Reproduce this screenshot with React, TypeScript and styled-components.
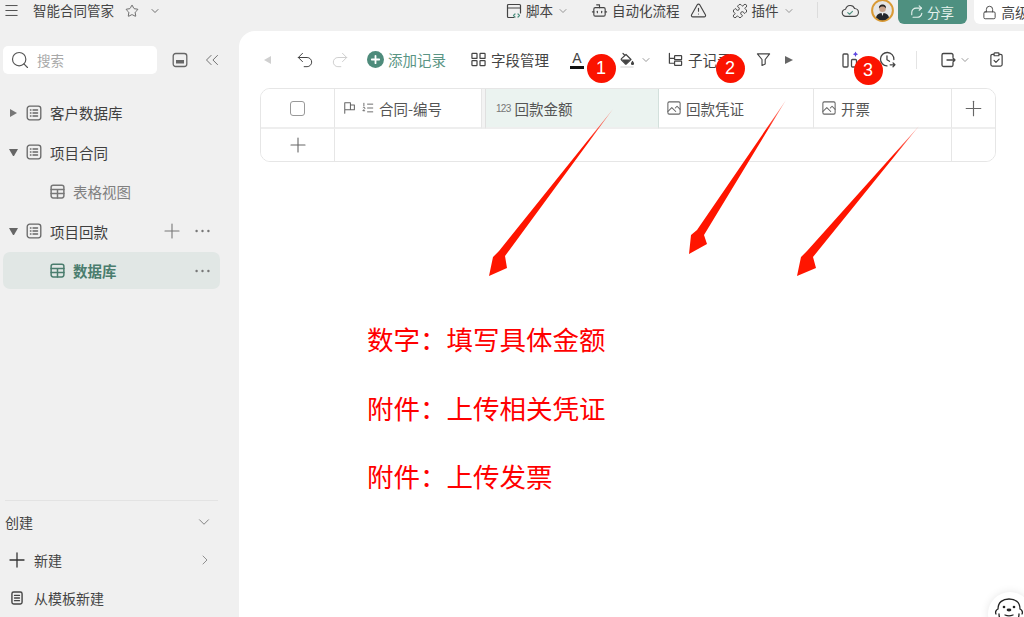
import React from 'react'
import styled, { createGlobalStyle } from 'styled-components'
import {
  Bot, ChevronDown, ChevronRight, ChevronsLeft, Lock, Menu, Plus, Puzzle, Redo2, Search, Star, TriangleAlert, Undo2,
} from 'lucide-react'

const GlobalStyle = createGlobalStyle`
  html, body { margin: 0; padding: 0; }
  body {
    font-family: "Noto Sans CJK SC", "Noto Sans", sans-serif;
    color: #3b3b3b;
    background: #f0f0f0;
  }
  * { box-sizing: border-box; }
`

const Page = styled.div`
  position: relative;
  width: 1024px;
  height: 617px;
  overflow: hidden;
  background: #f0f0f0;
  display: flex;
  flex-direction: column;
`

/* ---------- top bar ---------- */
const Header = styled.header`
  height: 31px;
  flex: none;
  display: flex;
  align-items: flex-start;
  color: #444;
`
const HeadItem = styled.div<{ $ml?: number }>`
  height: 21px;
  display: flex;
  align-items: center;
  gap: 4px;
  margin-left: ${(p) => p.$ml || 0}px;
  font-size: 13.5px;
  line-height: 21px;
  white-space: nowrap;
  flex: none;
`
const ShareButton = styled.div`
  width: 69px;
  height: 24px;
  margin-left: 4px;
  flex: none;
  background: #4e9080;
  color: #e4f0ec;
  border-radius: 0 0 6px 6px;
  display: flex;
  align-items: center;
  justify-content: center;
  gap: 3px;
  font-size: 13.5px;
`
const UpgradeButton = styled.div`
  width: 50px;
  height: 24px;
  margin-left: 7px;
  flex: none;
  background: #fff;
  border-radius: 0 0 0 6px;
  display: flex;
  align-items: center;
  gap: 5px;
  padding-left: 8px;
  font-size: 13.5px;
  white-space: nowrap;
  overflow: hidden;
`
const HeadDivider = styled.div`
  width: 1px;
  height: 16px;
  margin: 2px 0 0 22px;
  background: #dcdcdc;
  flex: none;
`

/* ---------- sidebar ---------- */
const Body = styled.div`
  flex: 1;
  min-height: 0;
  display: flex;
`
const Sidebar = styled.aside`
  width: 239px;
  flex: none;
  display: flex;
  flex-direction: column;
  padding-top: 15px;
`
const SearchRow = styled.div`
  display: flex;
  align-items: center;
  padding-left: 3px;
  color: #666;
`
const SearchBox = styled.div`
  width: 154px;
  height: 28px;
  background: #fff;
  border-radius: 5px;
  display: flex;
  align-items: center;
  gap: 7px;
  padding-left: 7px;
  font-size: 13.5px;
  color: #a8a8a8;
  margin-right: 15px;
`
const SearchGap = styled.span`
  width: 13px;
  flex: none;
`
const Tree = styled.div`
  margin-top: 19px;
  display: flex;
  flex-direction: column;
`
const TreeRow = styled.div<{ $child?: boolean; $active?: boolean }>`
  position: relative;
  height: 39.5px;
  display: flex;
  align-items: center;
  padding-left: ${(p) => (p.$child ? 50 : 9)}px;
  font-size: 14.5px;
  color: ${(p) => (p.$active ? '#4a7d6e' : p.$child ? '#808080' : '#3f3f3f')};
  font-weight: ${(p) => (p.$active ? 700 : 400)};
  ${(p) =>
    p.$active &&
    `&::before {
      content: '';
      position: absolute;
      left: 3px;
      top: 1px;
      width: 217px;
      height: 37px;
      background: #e1e7e5;
      border-radius: 7px;
    }`}
  > * { position: relative; }
`
const Caret = styled.span<{ $open?: boolean }>`
  flex: none;
  height: 0;
  margin-right: 8px;
  ${(p) =>
    p.$open
      ? `width: 9px; border-left: 4.5px solid transparent; border-right: 4.5px solid transparent; border-top: 7px solid #666;`
      : `width: 0; border-top: 4.5px solid transparent; border-bottom: 4.5px solid transparent; border-left: 7px solid #777; margin-left: 1px; margin-right: 9px;`}
`
const RowLabel = styled.span`
  margin-left: 8px;
  white-space: nowrap;
`
const RowActions = styled.div`
  margin-left: auto;
  padding-right: 29px;
  display: flex;
  align-items: center;
  gap: 14px;
  color: #777;
`
const SideBottom = styled.div`
  margin-top: auto;
  margin-left: 5px;
  width: 213px;
  border-top: 1px solid #e3e3e3;
  padding-top: 2px;
`
const BottomRow = styled.div<{ $indent?: boolean }>`
  height: 38px;
  display: flex;
  align-items: center;
  gap: 10px;
  padding-left: ${(p) => (p.$indent ? 5 : 0)}px;
  padding-right: 5px;
  font-size: 14px;
  color: #444;
`
const IconSlot = styled.span`
  width: 14px;
  flex: none;
  display: flex;
  justify-content: center;
  > svg { flex: none; }
`
const RowChevron = styled.span`
  margin-left: auto;
  display: flex;
  color: #777;
`

/* ---------- main panel ---------- */
const Main = styled.main`
  flex: 1;
  background: #fff;
  border-top-left-radius: 16px;
  padding-left: 21px;
`
const Toolbar = styled.div`
  height: 57px;
  display: flex;
  align-items: center;
  color: #555;
`
const Tool = styled.div<{ $ml?: number; $green?: boolean; $muted?: boolean; $tight?: boolean }>`
  flex: none;
  display: flex;
  align-items: center;
  gap: ${(p) => (p.$tight ? 4 : 5)}px;
  margin-left: ${(p) => p.$ml || 0}px;
  font-size: 14.5px;
  white-space: nowrap;
  color: ${(p) => (p.$green ? '#5a9584' : p.$muted ? '#cfcfcf' : '#444')};
`
const ToolDivider = styled.div`
  width: 1px;
  height: 18px;
  margin-left: 20px;
  background: #e4e4e4;
  flex: none;
`
const TextColor = styled.span`
  width: 14px;
  height: 18px;
  display: flex;
  flex-direction: column;
  align-items: center;
  font: 14px/14px "Liberation Sans", sans-serif;
  color: #444;
  &::after {
    content: '';
    width: 14px;
    height: 3px;
    flex: none;
    background: #111;
    margin-top: 1px;
  }
`
const PlayArrow = styled.span`
  width: 0;
  height: 0;
  border-top: 4.5px solid transparent;
  border-bottom: 4.5px solid transparent;
  border-left: 8px solid #666;
`
const BackArrow = styled.span`
  width: 0;
  height: 0;
  border-top: 4.5px solid transparent;
  border-bottom: 4.5px solid transparent;
  border-right: 7px solid #d0d0d0;
`

const Table = styled.div`
  width: 736px;
  display: grid;
  grid-template-columns: 74px 147px 4px 173px 155px 138px 43px;
  grid-template-rows: 40px 32px;
  border: 1px solid #e6e6e6;
  border-radius: 10px;
  overflow: hidden;
`
const Cell = styled.div<{ $active?: boolean; $center?: boolean; $span?: number; $top?: boolean; $noRight?: boolean }>`
  display: flex;
  align-items: center;
  justify-content: ${(p) => (p.$center ? 'center' : 'flex-start')};
  gap: 5px;
  padding-left: ${(p) => (p.$center ? 0 : 8)}px;
  font-size: 14.5px;
  color: #555;
  white-space: nowrap;
  background: ${(p) => (p.$active ? '#ebf3f0' : '#fff')};
  border-right: ${(p) => (p.$noRight ? 'none' : `1px solid ${p.$active ? '#d3e0dc' : '#e6e6e6'}`)};
  border-bottom: ${(p) => (p.$top ? '2px solid #eeeeee' : 'none')};
  ${(p) => p.$span && `grid-column: span ${p.$span};`}
`
const ResizeGap = styled.div`
  background: #f3f3f3;
  border-right: 1px solid #e0e0e0;
  border-bottom: 2px solid #eeeeee;
`
const Checkbox = styled.span`
  width: 15px;
  height: 15px;
  border: 1.3px solid #999;
  border-radius: 3px;
`
const NumTag = styled.span`
  font: 10px "Liberation Sans", sans-serif;
  letter-spacing: -0.7px;
  color: #777;
  margin: 0 -1px 0 2px;
`

const Notes = styled.div`
  margin: 157px 0 0 107px;
  display: flex;
  flex-direction: column;
  gap: 28.5px;
`
const Note = styled.div`
  height: 40px;
  font-size: 26.5px;
  line-height: 40px;
  color: #ff0000;
  white-space: nowrap;
`

/* ---------- annotation overlays ---------- */
const Badge = styled.div<{ $x: number; $y: number }>`
  position: absolute;
  left: ${(p) => p.$x - 14.5}px;
  top: ${(p) => p.$y - 14.5}px;
  width: 29px;
  height: 29px;
  border-radius: 50%;
  background: #fb1300;
  color: #fff;
  font: 18px/29px "Liberation Sans", sans-serif;
  text-align: center;
`
const Overlay = styled.svg`
  position: absolute;
  left: 0;
  top: 0;
  width: 1024px;
  height: 617px;
  pointer-events: none;
`
const Mascot = styled.div`
  position: absolute;
  left: 988px;
  top: 592px;
  width: 44px;
  height: 44px;
  border-radius: 50%;
  background: #fff;
  box-shadow: 0 0 8px rgba(0, 0, 0, 0.1);
  display: flex;
  justify-content: center;
  padding-top: 5px;
  padding-right: 2px;
`

/* ---------- drawn icons ---------- */
const Svg: React.FC<{ size?: number; sw?: number; children: React.ReactNode; color?: string }> = ({ size = 16, sw = 1.4, children, color }) => (
  <svg width={size} height={size} viewBox="0 0 16 16" fill="none" stroke={color || 'currentColor'} strokeWidth={sw} strokeLinecap="round" strokeLinejoin="round" style={{ flex: 'none' }}>
    {children}
  </svg>
)

const ListIcon = () => (
  <Svg size={16} sw={1.3} color="#666">
    <rect x="1.2" y="1.2" width="13.6" height="13.6" rx="2.5" />
    <path d="M4.4 5h.6M7 5h4.6M4.4 8h.6M7 8h4.6M4.4 11h.6M7 11h4.6" />
  </Svg>
)
const TableIcon: React.FC<{ color?: string }> = ({ color = '#777' }) => (
  <Svg size={15} sw={1.6} color={color}>
    <rect x="1.2" y="1.2" width="13.6" height="13.6" rx="2.2" />
    <path d="M1.2 5.8h13.6M1.2 10.2h13.6M8 5.8v9" />
  </Svg>
)
const Dots = () => (
  <svg width="15" height="4" viewBox="0 0 15 4" fill="#777" style={{ flex: 'none' }}>
    <circle cx="1.6" cy="2" r="1.2" /><circle cx="7.5" cy="2" r="1.2" /><circle cx="13.4" cy="2" r="1.2" />
  </svg>
)
const PanelIcon = () => (
  <Svg size={16} sw={1.3} color="#666">
    <rect x="1.2" y="1.5" width="13.6" height="13" rx="2.5" />
    <rect x="4" y="8" width="8" height="3.5" fill="#666" stroke="none" />
  </Svg>
)
const ScriptIcon = () => (
  <Svg size={16} sw={1.2}>
    <path d="M8 14.5H2.5a1 1 0 0 1-1-1v-11a1 1 0 0 1 1-1h11a1 1 0 0 1 1 1V10M1.5 5h13" />
    <path d="M9 11l-1.5 1.5L9 14M12 11l1.5 1.5L12 14" stroke="#4e9080" />
  </Svg>
)
const CloudCheckIcon = () => (
  <Svg size={18} sw={1}>
    <path d="M4.5 12.8a3.2 3.2 0 0 1-.4-6.4 4.2 4.2 0 0 1 8-.6 3.5 3.5 0 0 1-.2 7z" />
    <path d="M6 9.4l1.6 1.5 2.6-2.6" stroke="#4e9080" />
  </Svg>
)
const Avatar = () => (
  <svg width="23" height="23" viewBox="0 0 23 23" style={{ flex: 'none' }}>
    <circle cx="11.5" cy="11.5" r="10.4" fill="#e6e6e6" stroke="#d99a35" strokeWidth="2" />
    <path d="M5 18.5c1-3.5 3.5-4.5 6.5-4.5s5.5 1 6.5 4.5a9 9 0 0 1-13 0z" fill="#23262b" />
    <path d="M10.5 14h2l-1 3z" fill="#f4f4f4" />
    <circle cx="11.5" cy="9.8" r="3.3" fill="#c9a48c" />
    <path d="M8 9.5c-.3-3 1.5-4 3.5-4s3.8 1 3.5 4c-1-1.5-2-2-3.5-2s-2.5.5-3.5 2z" fill="#2b2623" />
  </svg>
)
const ShareIcon = () => (
  <Svg size={14} sw={1.3}>
    <path d="M13.5 9.5a5.5 5.5 0 0 1-5.5 4.5H3.5M2 11V8.5a5 5 0 0 1 5-5h6" />
    <path d="M10.5 1l2.7 2.5L10.5 6" />
  </Svg>
)
const AddCircle = () => (
  <svg width="17" height="17" viewBox="0 0 17 17" style={{ flex: 'none' }}>
    <circle cx="8.5" cy="8.5" r="8.5" fill="#4e8b7b" />
    <path d="M8.5 4.8v7.4M4.8 8.5h7.4" stroke="#fff" strokeWidth="1.8" strokeLinecap="round" />
  </svg>
)
const FieldsIcon = () => (
  <Svg size={15} sw={1.3}>
    <rect x="1" y="1.5" width="5.4" height="5.4" rx=".6" />
    <rect x="9.6" y="1.5" width="5.4" height="5.4" rx=".6" />
    <rect x="1" y="9.1" width="5.4" height="5.4" rx=".6" />
    <rect x="9.6" y="9.1" width="5.4" height="5.4" rx=".6" />
  </Svg>
)
const PaintIcon = () => (
  <Svg size={16} sw={1.2}>
    <path d="M4 1.5l1.5 1.5" />
    <path d="M7 2.5l5 5-4.5 4.2a1 1 0 0 1-1.4 0L2.5 8a1 1 0 0 1 0-1.4z" />
    <path d="M2.8 7.5h8.5L7.5 11.7a1 1 0 0 1-1.4 0z" fill="#444" stroke="none" />
    <path d="M13.5 9.5c.6.9 1 1.5 1 2a1 1 0 0 1-2 0c0-.5.4-1.1 1-2z" fill="#444" />
    <path d="M2 15h12" stroke="#e2e2e2" strokeWidth="1.6" />
  </Svg>
)
const SubRecordIcon = () => (
  <Svg size={15} sw={1.3}>
    <path d="M1.5 1.5v10.5h4.5M1.5 6.8h4.5" />
    <rect x="7" y="3.8" width="7.5" height="4.4" rx=".6" />
    <rect x="7" y="9.8" width="7.5" height="4.4" rx=".6" />
  </Svg>
)
const FunnelIcon = () => (
  <Svg size={15} sw={1.2}>
    <path d="M1.5 2h13L9.8 8v4.8l-3.4 1.6V8z" />
  </Svg>
)
const BoardIcon = () => (
  <svg width="18" height="17" viewBox="0 0 18 17" fill="none" stroke="#4a4a4a" strokeWidth="1.3" style={{ flex: 'none' }}>
    <rect x="1" y="3" width="5" height="13" rx="1" />
    <rect x="9.5" y="8.5" width="5" height="7.5" rx="1" />
    <path d="M13.5 0.5l.9 1.8 1.8.9-1.8.9-.9 1.8-.9-1.8-1.8-.9 1.8-.9z" fill="#5b45e0" stroke="none" />
  </svg>
)
const HistoryIcon = () => (
  <Svg size={17} sw={1.2}>
    <path d="M7.5 14A6.3 6.3 0 1 1 14 8" />
    <path d="M7.5 4.5v3.8l2.4 1.4M10.5 13h4.5M13.2 11.2L15 13l-1.8 1.8" />
  </Svg>
)
const ExportIcon = () => (
  <Svg size={16} sw={1.3}>
    <path d="M13 5V3a1.5 1.5 0 0 0-1.5-1.5h-8A1.5 1.5 0 0 0 2 3v10a1.5 1.5 0 0 0 1.5 1.5h8A1.5 1.5 0 0 0 13 13v-2" />
    <path d="M7 8h8M13 6l2 2-2 2" />
  </Svg>
)
const ClipboardIcon = () => (
  <Svg size={15} sw={1.3}>
    <rect x="2" y="2.5" width="12" height="12.5" rx="1.6" />
    <rect x="5.4" y="1" width="5.2" height="3" rx=".6" fill="#fff" />
    <path d="M5.4 9l2 2 3.4-3.4" />
  </Svg>
)
const FlagIcon = () => (
  <Svg size={14} sw={1.2} color="#666">
    <path d="M2 14V2h6.5v8H2M8.5 4.5h4.5v5.5H8.5" />
  </Svg>
)
const OrderIcon = () => (
  <svg width="12" height="14" viewBox="0 0 14 14" style={{ flex: 'none' }} fill="none" stroke="#666" strokeWidth="1.1">
    <path d="M6 2.5h7M6 7h7M6 11.5h7M2.2 1v4M1 6.8c.6-1 2.4-.8 2.4.4 0 1-1.5 1.4-2.4 3h2.6" />
  </svg>
)
const PictureIcon = () => (
  <Svg size={14} sw={1.2} color="#666">
    <rect x="1" y="1" width="14" height="14" rx="1.5" />
    <path d="M1 12l4.5-4.5L10 12M9.5 8l2-2 3.5 3.5" />
  </Svg>
)
const DocIcon = () => (
  <Svg size={14} sw={1.6} color="#444">
    <rect x="2.2" y="1.2" width="11.6" height="13.6" rx="2" />
    <path d="M5.2 5h5.6M5.2 8h5.6M5.2 11h5.6" />
  </Svg>
)
const OtterFace = () => (
  <svg width="30" height="26" viewBox="0 0 30 26" fill="none" stroke="#222" strokeWidth="1.3" strokeLinecap="round">
    <path d="M4 12C4 5 9 2 15 2s11 3 11 10c2 1 3 3 2 5M4 12c-2 1-3 3-2 5M5 17c0 5 3 9 10 9s10-4 10-9" />
    <circle cx="10" cy="10" r="1.3" fill="#222" stroke="none" />
    <circle cx="20" cy="10" r="1.3" fill="#222" stroke="none" />
    <ellipse cx="15" cy="13" rx="2.4" ry="1.4" fill="#222" stroke="none" />
    <path d="M11 18c2.5 1 5.5 1 8 0" />
  </svg>
)

type Point = [number, number]
type ArrowShape = { id: string; tail: Point; tip: Point; barbA: Point; barbB: Point; neckA: Point; neckB: Point }

const arrows: ArrowShape[] = [
  { id: 'a1', tail: [613, 109], tip: [489, 276], barbA: [493, 257], barbB: [507, 268], neckA: [499, 251], neckB: [505, 256] },
  { id: 'a2', tail: [786, 100], tip: [689, 254], barbA: [691, 235], barbB: [707, 244], neckA: [697, 230], neckB: [704, 235] },
  { id: 'a3', tail: [919, 126], tip: [797, 276], barbA: [801, 257], barbB: [816, 268], neckA: [807, 251], neckB: [813, 257] },
]

const pts = (list: Point[]) => list.map((p) => p.join(',')).join(' ')

const Arrows = () => (
  <Overlay viewBox="0 0 1024 617">
    <defs>
      {arrows.map((a) => (
        <linearGradient key={a.id} id={a.id} gradientUnits="userSpaceOnUse" x1={a.tail[0]} y1={a.tail[1]} x2={a.tip[0]} y2={a.tip[1]}>
          <stop offset="0" stopColor="#ff1500" stopOpacity="0.35" />
          <stop offset="0.2" stopColor="#ff1500" />
          <stop offset="1" stopColor="#ff1500" />
        </linearGradient>
      ))}
    </defs>
    {arrows.map((a) => (
      <polygon key={a.id} fill={`url(#${a.id})`} points={pts([a.tail, a.neckB, a.barbB, a.tip, a.barbA, a.neckA])} />
    ))}
  </Overlay>
)

export default function App() {
  return (
    <Page>
      <GlobalStyle />
      <Header>
        <HeadItem $ml={3}><Menu size={17} strokeWidth={1.3} /></HeadItem>
        <HeadItem $ml={13}>智能合同管家</HeadItem>
        <HeadItem $ml={11}><Star size={14} strokeWidth={1.3} /></HeadItem>
        <HeadItem $ml={10}><ChevronDown size={12} strokeWidth={1.5} /></HeadItem>
        <HeadItem $ml={345}><ScriptIcon />脚本<ChevronDown size={12} strokeWidth={1.5} color="#777" /></HeadItem>
        <HeadItem $ml={22}><Bot size={17} strokeWidth={1.6} />自动化流程</HeadItem>
        <HeadItem $ml={10}><TriangleAlert size={17} strokeWidth={1.6} /></HeadItem>
        <HeadItem $ml={25}><Puzzle size={16} strokeWidth={1.4} />插件<ChevronDown size={12} strokeWidth={1.5} color="#777" /></HeadItem>
        <HeadDivider />
        <HeadItem $ml={23}><CloudCheckIcon /></HeadItem>
        <HeadItem $ml={12}><Avatar /></HeadItem>
        <ShareButton><ShareIcon />分享</ShareButton>
        <UpgradeButton><Lock size={15} strokeWidth={1.5} style={{ flex: 'none' }} />高级</UpgradeButton>
      </Header>
      <Body>
        <Sidebar>
          <SearchRow>
            <SearchBox><Search size={20} strokeWidth={1.4} color="#555" />搜索</SearchBox>
            <PanelIcon />
            <SearchGap />
            <ChevronsLeft size={22} strokeWidth={1} color="#666" />
          </SearchRow>
          <Tree>
            <TreeRow><Caret /><ListIcon /><RowLabel>客户数据库</RowLabel></TreeRow>
            <TreeRow><Caret $open /><ListIcon /><RowLabel>项目合同</RowLabel></TreeRow>
            <TreeRow $child><TableIcon /><RowLabel>表格视图</RowLabel></TreeRow>
            <TreeRow>
              <Caret $open /><ListIcon /><RowLabel>项目回款</RowLabel>
              <RowActions><Plus size={24} strokeWidth={1.1} style={{ margin: '0 -3px' }} /><Dots /></RowActions>
            </TreeRow>
            <TreeRow $child $active>
              <TableIcon color="#4a7d6e" /><RowLabel>数据库</RowLabel>
              <RowActions><Dots /></RowActions>
            </TreeRow>
          </Tree>
          <SideBottom>
            <BottomRow>创建<RowChevron><ChevronDown size={18} strokeWidth={1.2} /></RowChevron></BottomRow>
            <BottomRow $indent>
              <IconSlot><Plus size={24} strokeWidth={1.3} color="#333" /></IconSlot>
              新建
              <RowChevron><ChevronRight size={16} strokeWidth={1.2} /></RowChevron>
            </BottomRow>
            <BottomRow $indent><IconSlot><DocIcon /></IconSlot>从模板新建</BottomRow>
          </SideBottom>
        </Sidebar>
        <Main>
          <Toolbar>
            <Tool $ml={4}><BackArrow /></Tool>
            <Tool $ml={24}><Undo2 size={20} strokeWidth={1.2} /></Tool>
            <Tool $ml={15} $muted><Redo2 size={20} strokeWidth={1.2} /></Tool>
            <Tool $ml={17} $green $tight><AddCircle />添加记录</Tool>
            <Tool $ml={25}><FieldsIcon />字段管理</Tool>
            <Tool $ml={21}><TextColor>A</TextColor></Tool>
            <Tool $ml={35}><PaintIcon /></Tool>
            <Tool $ml={5}><ChevronDown size={12} strokeWidth={1.5} color="#777" /></Tool>
            <Tool $ml={16}><SubRecordIcon />子记录</Tool>
            <Tool $ml={24}><FunnelIcon /></Tool>
            <Tool $ml={14}><PlayArrow /></Tool>
            <Tool $ml={49}><BoardIcon /></Tool>
            <Tool $ml={19}><HistoryIcon /></Tool>
            <ToolDivider />
            <Tool $ml={23}><ExportIcon /></Tool>
            <Tool $ml={3}><ChevronDown size={12} strokeWidth={1.5} color="#777" /></Tool>
            <Tool $ml={18}><ClipboardIcon /></Tool>
          </Toolbar>
          <Table>
            <Cell $center $top><Checkbox /></Cell>
            <Cell $top><FlagIcon /><OrderIcon />合同-编号</Cell>
            <ResizeGap />
            <Cell $top $active><NumTag>123</NumTag>回款金额</Cell>
            <Cell $top><PictureIcon />回款凭证</Cell>
            <Cell $top><PictureIcon />开票</Cell>
            <Cell $top $center $noRight><Plus size={25} strokeWidth={1.1} color="#666" /></Cell>
            <Cell $center><Plus size={24} strokeWidth={1.1} color="#666" /></Cell>
            <Cell $span={5} />
            <Cell $noRight />
          </Table>
          <Notes>
            <Note>数字：填写具体金额</Note>
            <Note>附件：上传相关凭证</Note>
            <Note>附件：上传发票</Note>
          </Notes>
        </Main>
      </Body>
      <Arrows />
      <Badge $x={601} $y={68}>1</Badge>
      <Badge $x={730} $y={68}>2</Badge>
      <Badge $x={868} $y={70}>3</Badge>
      <Mascot><OtterFace /></Mascot>
    </Page>
  )
}
